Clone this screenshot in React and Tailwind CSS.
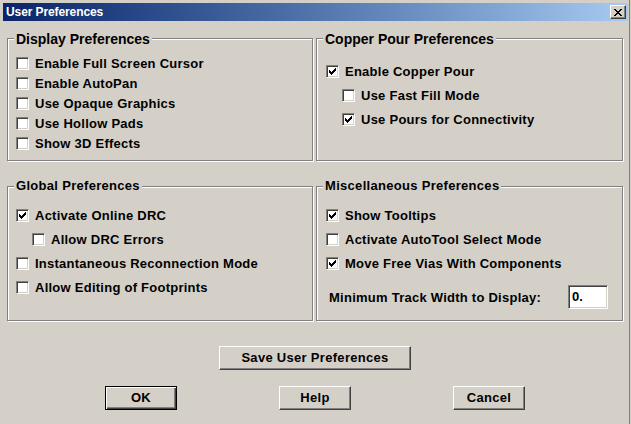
import React from 'react'

const display = [
  { label: 'Enable Full Screen Cursor', checked: false },
  { label: 'Enable AutoPan', checked: false },
  { label: 'Use Opaque Graphics', checked: false },
  { label: 'Use Hollow Pads', checked: false },
  { label: 'Show 3D Effects', checked: false }
]

const copper = [
  { label: 'Enable Copper Pour', checked: true },
  { label: 'Use Fast Fill Mode', checked: false, indent: true },
  { label: 'Use Pours for Connectivity', checked: true, indent: true }
]

const global = [
  { label: 'Activate Online DRC', checked: true },
  { label: 'Allow DRC Errors', checked: false, indent: true },
  { label: 'Instantaneous Reconnection Mode', checked: false },
  { label: 'Allow Editing of Footprints', checked: false }
]

const misc = [
  { label: 'Show Tooltips', checked: true },
  { label: 'Activate AutoTool Select Mode', checked: false },
  { label: 'Move Free Vias With Components', checked: true }
]

// classic 7x7 check glyph
const checkPixels = [
  [6, 0], [5, 1], [6, 1], [0, 2], [4, 2], [5, 2], [6, 2],
  [0, 3], [1, 3], [3, 3], [4, 3], [5, 3],
  [0, 4], [1, 4], [2, 4], [3, 4], [4, 4],
  [1, 5], [2, 5], [3, 5], [2, 6]
]

const closePixels = [
  [0, 0], [1, 0], [6, 0], [7, 0],
  [1, 1], [2, 1], [5, 1], [6, 1],
  [2, 2], [3, 2], [4, 2], [5, 2],
  [3, 3], [4, 3],
  [2, 4], [3, 4], [4, 4], [5, 4],
  [1, 5], [2, 5], [5, 5], [6, 5],
  [0, 6], [1, 6], [6, 6], [7, 6]
]

const Checkbox = ({ checked }) => (
  <div className="w-[13px] h-[13px] shrink-0 bg-white border border-t-[#808080] border-l-[#808080] border-r-white border-b-white shadow-[inset_1px_1px_0_#404040,inset_-1px_-1px_0_#d4d0c8] flex items-center justify-center">
    {checked && (
      <svg width="7" height="7" viewBox="0 0 7 7" shapeRendering="crispEdges">
        {checkPixels.map(([x, y]) => (
          <rect key={`${x}-${y}`} x={x} y={y} width="1" height="1" fill="#000" />
        ))}
      </svg>
    )}
  </div>
)

const Row = ({ label, checked, indent, tall }) => (
  <div className={`flex items-center gap-[6px] ${tall ? 'h-[24px]' : 'h-[20px]'} ${indent ? 'pl-[16px]' : ''}`}>
    <Checkbox checked={checked} />
    <span className="text-[13px] leading-[15px] font-bold tracking-[0.25px] whitespace-nowrap">{label}</span>
  </div>
)

const Group = ({ title, small, className, children }) => (
  <div className={`relative border border-[#808080] shadow-[inset_1px_1px_0_#fff,1px_1px_0_#fff] ${className}`}>
    <span
      className={`absolute left-[6px] bg-[#d4d0c8] px-[2px] font-bold leading-[16px] whitespace-nowrap ${
        small ? 'top-[-9px] text-[13px] tracking-[0.3px]' : 'top-[-8px] text-[14px]'
      }`}
    >
      {title}
    </span>
    {children}
  </div>
)

const Button = ({ children, isDefault, className }) => (
  <button
    className={`flex items-center justify-center h-[24px] text-[13px] font-bold tracking-[0.3px] text-black bg-[#d4d0c8] ${
      isDefault
        ? 'border border-black shadow-[inset_1px_1px_0_#fff,inset_-1px_-1px_0_#404040,inset_-2px_-2px_0_#808080]'
        : 'border border-t-white border-l-white border-r-[#404040] border-b-[#404040] shadow-[inset_-1px_-1px_0_#808080]'
    } ${className}`}
  >
    {children}
  </button>
)

export default function App() {
  return (
    <div className="w-[631px] h-[424px] bg-[#d4d0c8] overflow-hidden font-['Liberation_Sans',Arial,sans-serif] text-black">
      <div className="w-[630px] h-[424px] border-r border-[#808080] flex flex-col">
        {/* Title bar */}
        <div className="mt-[3px] ml-[3px] w-[625px] h-[18px] shrink-0 bg-linear-to-r from-[#0a246a] to-[#a6caf0] flex items-center justify-between pl-[3px] pr-[2px]">
          <span className="text-white text-[12px] font-bold tracking-[-0.1px] leading-[14px]">User Preferences</span>
          <div className="w-[16px] h-[14px] bg-[#d4d0c8] border border-t-white border-l-white border-r-[#404040] border-b-[#404040] shadow-[inset_-1px_-1px_0_#808080] flex items-center justify-center">
            <svg width="8" height="7" viewBox="0 0 8 7" shapeRendering="crispEdges" className="-ml-[1px]">
              {closePixels.map(([x, y]) => (
                <rect key={`${x}-${y}`} x={x} y={y} width="1" height="1" fill="#000" />
              ))}
            </svg>
          </div>
        </div>

        {/* Top groups */}
        <div className="flex gap-[3px] ml-[7px] mt-[17px]">
          <Group title="Display Preferences" className="w-[306px] h-[123px] pt-[14px] pl-[8px]">
            {display.map((r) => (
              <Row key={r.label} {...r} />
            ))}
          </Group>
          <Group title="Copper Pour Preferences" className="w-[307px] h-[123px] pt-[20px] pl-[9px]">
            {copper.map((r) => (
              <Row key={r.label} {...r} tall />
            ))}
          </Group>
        </div>

        {/* Bottom groups */}
        <div className="flex gap-[3px] ml-[7px] mt-[25px]">
          <Group title="Global Preferences" small className="w-[306px] h-[135px] pt-[16px] pl-[8px]">
            {global.map((r) => (
              <Row key={r.label} {...r} tall />
            ))}
          </Group>
          <Group title="Miscellaneous Preferences" small className="w-[307px] h-[135px] pt-[16px] pl-[9px]">
            {misc.map((r) => (
              <Row key={r.label} {...r} tall />
            ))}
            <div className="flex items-center justify-between mt-[10px] pl-[3px] pr-[14px]">
              <span className="text-[13px] leading-[15px] font-bold tracking-[0.25px] whitespace-nowrap">
                Minimum Track Width to Display:
              </span>
              <div className="w-[40px] h-[24px] bg-white border border-t-[#808080] border-l-[#808080] border-r-white border-b-white shadow-[inset_1px_1px_0_#404040,inset_-1px_-1px_0_#d4d0c8] flex items-center pl-[3px] text-[13px] font-bold">
                0.
              </div>
            </div>
          </Group>
        </div>

        {/* Buttons */}
        <div className="flex justify-center mt-[25px] pl-[1px]">
          <Button className="w-[192px]">Save User Preferences</Button>
        </div>
        <div className="flex justify-center gap-[102px] mt-[16px] pl-[1px]">
          <Button isDefault className="w-[72px]">OK</Button>
          <Button className="w-[72px]">Help</Button>
          <Button className="w-[72px]">Cancel</Button>
        </div>
      </div>
    </div>
  )
}
